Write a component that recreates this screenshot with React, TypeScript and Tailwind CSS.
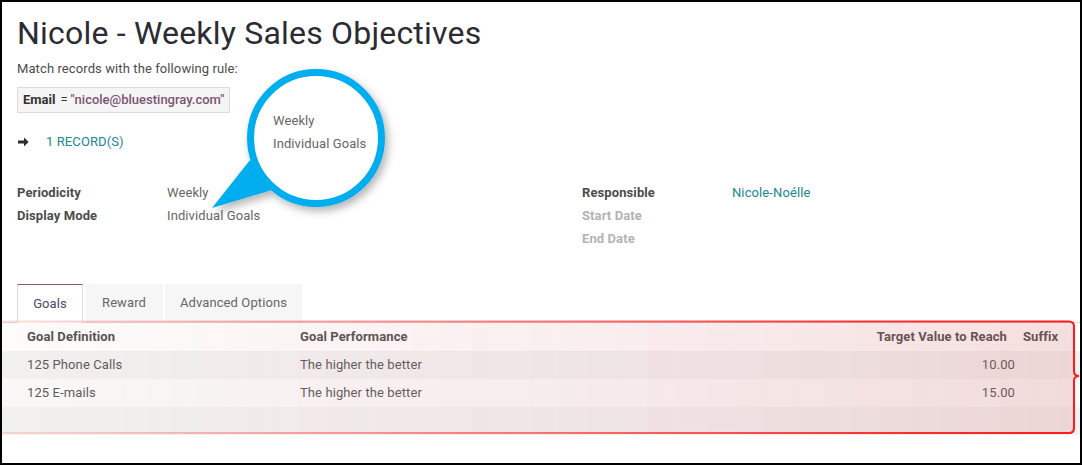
import React from "react";

const rows = [
  { id: 1, name: "125 Phone Calls", perf: "The higher the better", target: "10.00" },
  { id: 2, name: "125 E-mails", perf: "The higher the better", target: "15.00" },
];

const Field = ({ label, value, muted, link }: { label: string; value?: string; muted?: boolean; link?: boolean }) => (
  <div className="flex h-[23px] items-center">
    <div className={`w-[150px] font-bold ${muted ? "text-[#b3b3b3]" : "text-[#4c4c4c]"}`}>{label}</div>
    {value && <div className={link ? "text-[#21878f]" : "text-[#666]"}>{value}</div>}
  </div>
);

const App = () => {
  return (
    <div className="relative h-[466px] w-[1082px] bg-white font-['Roboto',sans-serif] text-[13px] tracking-[0.1px]">
      <div className="h-[465px] w-[1082px] overflow-hidden border-2 border-black">
        <div className="pl-[15px] pt-[12px]">
          <h1 className="text-[32px] leading-[38px] tracking-[0.2px] text-[#2b2b33]">Nicole - Weekly Sales Objectives</h1>
          <p className="mt-[8px] leading-[18px] text-[#4c4c4c]">Match records with the following rule:</p>
          <div className="mt-[9px] inline-flex h-[26px] items-center border border-[#dcdcdc] bg-[#f5f5f5] px-[5px] tracking-normal">
            <span className="font-bold text-[#333]">Email</span>
            <span className="ml-[5px] text-[#333]">=</span>
            <span className="ml-[3px] font-medium text-[#7b5473]">"nicole@bluestingray.com"</span>
          </div>
          <div className="mt-[20px] flex h-[18px] items-center">
            <svg width="11" height="10" viewBox="0 0 11 10" className="ml-[1px]">
              <path d="M0 3.6H6V0.6L10.6 5L6 9.4V6.4H0Z" fill="#2b2b33" />
            </svg>
            <span className="ml-[17px] text-[#21878f]">1 RECORD(S)</span>
          </div>
          <div className="mt-[30px] flex">
            <div className="w-[565px]">
              <Field label="Periodicity" value="Weekly" />
              <Field label="Display Mode" value="Individual Goals" />
            </div>
            <div>
              <Field label="Responsible" value="Nicole-Noélle" link />
              <Field label="Start Date" muted />
              <Field label="End Date" muted />
            </div>
          </div>
        </div>

        <div className="mt-[35px] flex h-[38px] items-end border-b border-[#ddd] pl-[15px]">
          <div className="-mb-px flex h-[39px] w-[66px] items-center justify-center border border-t-[#875a7b] border-x-[#ddd] border-b-white bg-white text-[#4a4a66]">
            Goals
          </div>
          <div className="ml-[2px] flex h-[38px] w-[78px] items-center justify-center bg-[#f6f6f6] text-[#666]">Reward</div>
          <div className="ml-[2px] flex h-[38px] w-[137px] items-center justify-center bg-[#f6f6f6] text-[#666]">
            Advanced Options
          </div>
        </div>

        <div className="text-[#555]">
          <div className="flex h-[28px] items-center bg-white font-bold text-[#4c4c4c] shadow-[0_1px_2px_rgba(0,0,0,0.06)]">
            <div className="w-[298px] pl-[25px]">Goal Definition</div>
            <div className="flex-1">Goal Performance</div>
            <div className="w-[200px] pr-[8px] text-right">Target Value to Reach</div>
            <div className="w-[65px] pl-[8px]">Suffix</div>
          </div>
          {rows.map((row, i) => (
            <div key={row.id} className={`flex h-[28px] items-center ${i % 2 === 0 ? "bg-[#f3f3f3]" : "bg-[#fbfbfb]"}`}>
              <div className="w-[298px] pl-[25px]">{row.name}</div>
              <div className="flex-1">{row.perf}</div>
              <div className="w-[200px] text-right">{row.target}</div>
              <div className="w-[65px]" />
            </div>
          ))}
          <div className="h-[28px] bg-[#f3f3f3]" />
        </div>
      </div>

      {/* highlight around the goals table */}
      <svg className="pointer-events-none absolute left-0 top-0" width="1082" height="466" viewBox="0 0 1082 466">
        <defs>
          <linearGradient id="hlFill" x1="0" y1="0" x2="1" y2="0">
            <stop offset="0" stopColor="#f0c0c0" stopOpacity="0.05" />
            <stop offset="0.3" stopColor="#e9a6a6" stopOpacity="0.1" />
            <stop offset="1" stopColor="#d86e6e" stopOpacity="0.2" />
          </linearGradient>
          <linearGradient id="hlStroke" x1="0" y1="0" x2="1" y2="0">
            <stop offset="0" stopColor="#ff3b3b" stopOpacity="0.15" />
            <stop offset="0.4" stopColor="#ff3030" stopOpacity="0.55" />
            <stop offset="0.8" stopColor="#ff1f1f" stopOpacity="0.9" />
            <stop offset="1" stopColor="#ff1a1a" />
          </linearGradient>
          <filter id="hlShadow" x="-5%" y="-20%" width="110%" height="150%">
            <feDropShadow dx="0" dy="3" stdDeviation="3" floodColor="#000" floodOpacity="0.12" />
          </filter>
          <filter id="bubbleShadow" x="-30%" y="-30%" width="160%" height="160%">
            <feDropShadow dx="3" dy="4" stdDeviation="4" floodColor="#000" floodOpacity="0.3" />
          </filter>
        </defs>
        <rect x="2" y="321" width="1072" height="112" rx="4" fill="url(#hlFill)" filter="url(#hlShadow)" />
        <path
          d="M2 321.5H1069Q1074 321.5 1074 326.5V371Q1074 376 1079 376Q1074 376 1074 381V428Q1074 433 1069 433H2"
          fill="none"
          stroke="url(#hlStroke)"
          strokeWidth="2"
        />

        {/* callout bubble */}
        <g filter="url(#bubbleShadow)">
          <path d="M250 160L212 208L272 190Z" fill="#00aeef" />
          <circle cx="316" cy="138" r="65.5" fill="#ffffff" stroke="#00aeef" strokeWidth="7" />
        </g>
      </svg>

      <div className="absolute left-[273px] top-[112px] leading-[18px] text-[#666]">Weekly</div>
      <div className="absolute left-[273px] top-[135px] leading-[18px] text-[#666]">Individual Goals</div>
    </div>
  );
};

export default App;
